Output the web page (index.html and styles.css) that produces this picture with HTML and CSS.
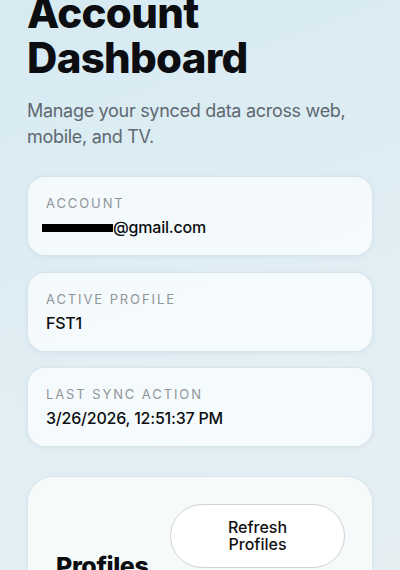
FILE: index.html
```html
<!DOCTYPE html>
<html lang="en">
<head>
    <meta charset="UTF-8">
    <meta name="viewport" content="width=device-width, initial-scale=1.0">
    <title>Account Dashboard</title>
    <link rel="stylesheet" href="styles.css">
</head>
<body>
    <main class="page">
        <header class="intro">
            <h1>Account Dashboard</h1>
            <p>Manage your synced data across web, mobile, and TV.</p>
        </header>

        <section class="info-list">
            <div class="info-card">
                <div class="label">Account</div>
                <div class="value"><span class="redact"></span>@gmail.com</div>
            </div>
            <div class="info-card">
                <div class="label">Active Profile</div>
                <div class="value">FST1</div>
            </div>
            <div class="info-card">
                <div class="label">Last Sync Action</div>
                <div class="value">3/26/2026, 12:51:37 PM</div>
            </div>
        </section>

        <section class="panel">
            <div class="panel-head">
                <h2>Profiles</h2>
                <button class="btn-pill">Refresh Profiles</button>
            </div>
        </section>
    </main>
</body>
</html>
```

FILE: styles.css
```css
* { box-sizing: border-box; }
html, body { margin: 0; height: 100%; }
body { font-family: Inter, "Noto Sans", sans-serif; color: #0b0d10; background: linear-gradient(160deg, #d6eaf2 0%, #e1eef4 55%, #e6f0f3 100%); overflow: hidden; }

.page { padding: 0 27px; margin-top: -10px; }

.intro h1 { font-size: 42px; font-weight: 800; line-height: 45px; letter-spacing: -0.7px; margin: 0; width: 240px; }
.intro p { font-size: 18px; line-height: 26px; color: #5f6870; margin: 18px 0 0; letter-spacing: -0.3px; }

.info-list { display: flex; flex-direction: column; gap: 15.5px; margin-top: 26px; }
.info-card { background: rgba(248, 251, 253, 0.85); border: 1px solid rgba(205, 220, 228, 0.7); border-radius: 18px; padding: 17px 18px; height: 80px; box-shadow: 0 1px 4px rgba(120, 150, 170, 0.12); }
.label { font-size: 13px; line-height: 18px; letter-spacing: 1.9px; text-transform: uppercase; color: #90959b; }
.value { font-size: 16px; line-height: 22px; font-weight: 500; margin-top: 4px; letter-spacing: -0.2px; }
.redact { display: inline-block; width: 71px; height: 8px; margin-left: -4px; background: #000; vertical-align: 1px; }

.panel { background: rgba(247, 251, 252, 0.9); border: 1px solid rgba(205, 220, 228, 0.7); border-radius: 26px; margin-top: 29px; padding: 27px 27px 30px 28px; height: 200px; box-shadow: 0 1px 4px rgba(120, 150, 170, 0.12); }
.panel-head { display: flex; justify-content: space-between; align-items: flex-start; }
.panel-head h2 { font-size: 25px; font-weight: 800; margin: 47px 0 0; letter-spacing: -0.4px; }
.btn-pill { width: 175px; height: 64px; border: 1px solid #cfd3d6; border-radius: 32px; background: #fff; font-family: Inter, sans-serif; font-size: 16px; font-weight: 500; line-height: 17px; color: #111; padding: 0 30px; }
```
